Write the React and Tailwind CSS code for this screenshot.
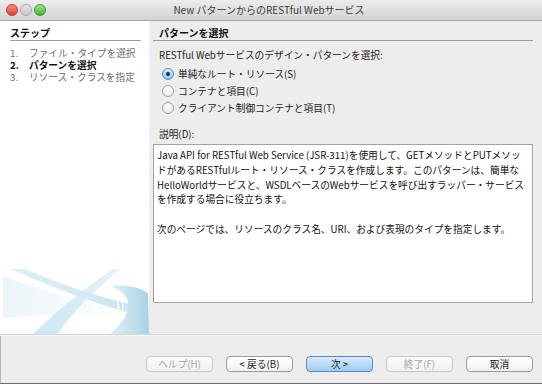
import React from "react";

const FONT = { fontFamily: '"Noto Sans CJK JP", "Noto Sans", sans-serif' };

function Light({ cls }) {
  return <div className={`w-[12px] h-[12px] rounded-full ${cls}`} />;
}

function Radio({ checked, label }) {
  return (
    <div className="flex items-center h-[17px] pl-[9px]">
      {checked ? (
        <div className="w-[12px] h-[12px] rounded-full border border-[#5b8fd0] bg-gradient-to-b from-[#d9ecfd] to-[#8fc1f2] flex items-center justify-center">
          <div className="w-[4px] h-[4px] rounded-full bg-[#1d2a3a]" />
        </div>
      ) : (
        <div className="w-[12px] h-[12px] rounded-full border border-[#9c9c9c] bg-gradient-to-b from-[#ffffff] to-[#ececec]" />
      )}
      <span className="ml-[4px] text-[9.7px] leading-[14px] text-[#222]">{label}</span>
    </div>
  );
}

function Btn({ children, variant }) {
  const base = "w-[67px] h-[16px] rounded-[4px] border flex items-center justify-center text-[9.7px] leading-[14px] whitespace-pre";
  if (variant === "default")
    return (
      <div className={`${base} border-[#5f86c0] bg-gradient-to-b from-[#d8ebfc] to-[#9ccbf3] text-[#1a1a1a]`}>{children}</div>
    );
  if (variant === "disabled")
    return (
      <div className={`${base} border-[#c6c6c6] bg-gradient-to-b from-[#fbfbfb] to-[#f1f1f1] text-[#a6a6a6]`}>{children}</div>
    );
  return (
    <div className={`${base} border-[#9a9a9a] bg-gradient-to-b from-[#ffffff] to-[#f1f1f1] text-[#1a1a1a]`}>{children}</div>
  );
}

function Swoosh() {
  return (
    <svg width="149" height="66" viewBox="0 0 149 66" className="block">
      <defs>
        <linearGradient id="fade" x1="0" y1="0" x2="1" y2="0">
          <stop offset="0" stopColor="#e9f4f8" stopOpacity="0.9" />
          <stop offset="1" stopColor="#e9f4f8" stopOpacity="0" />
        </linearGradient>
        <linearGradient id="cres" x1="0" y1="0" x2="1" y2="0">
          <stop offset="0" stopColor="#e2f0f6" />
          <stop offset="1" stopColor="#a9d3e4" />
        </linearGradient>
        <linearGradient id="lineA" x1="0" y1="0" x2="1" y2="0">
          <stop offset="0" stopColor="#dbeef5" />
          <stop offset="1" stopColor="#c4e2ee" />
        </linearGradient>
        <linearGradient id="lineB" x1="0" y1="1" x2="1" y2="0">
          <stop offset="0" stopColor="#c6e3ef" />
          <stop offset="1" stopColor="#e0f0f6" />
        </linearGradient>
      </defs>
      <path d="M3 8 C40 22 80 34 125 40 L120 48 C80 48 40 46 3 50 Z" fill="url(#fade)" />
      <path d="M10 1 L25 1 C60 16 95 28 130 36 L127 44 C90 34 50 18 10 1 Z" fill="url(#lineA)" opacity="0.9" />
      <path d="M113 1 L120 1 C95 22 72 44 58 66 L33 66 C55 44 85 20 113 1 Z" fill="url(#lineB)" opacity="0.85" />
      <path d="M110 18 C125 16 140 19 148 25 L149 66 L110 66 C122 56 130 44 128 33 C126 26 118 21 110 18 Z" fill="url(#cres)" />
      <path d="M116 30 C122 40 118 52 100 60" stroke="#ffffff" strokeWidth="1.5" fill="none" opacity="0.9" />
      <path d="M121 31 C126 42 122 54 106 63" stroke="#ffffff" strokeWidth="1.2" fill="none" opacity="0.9" />
    </svg>
  );
}

export default function App() {
  return (
    <div className="w-[542px] h-[384px] flex flex-col bg-[#ededed] overflow-hidden border-b border-[#6b6b6b]" style={FONT}>
      <div className="h-[21px] flex items-center bg-gradient-to-b from-[#ececec] to-[#d4d4d4] border-b border-[#a9a9a9]">
        <div className="flex items-center gap-[2px] pl-[6px]">
          <Light cls="bg-gradient-to-b from-[#f2908b] to-[#de3b33] border border-[#c0392f]" />
          <Light cls="bg-gradient-to-b from-[#e6e6e6] to-[#c8c8c8] border border-[#ababab]" />
          <Light cls="bg-gradient-to-b from-[#9fe38f] to-[#3bb72b] border border-[#3a9a2c]" />
        </div>
        <div className="flex-1 text-center text-[10px] leading-[14px] text-[#3a3a3a] pr-[50px]">
          New パターンからのRESTful Webサービス
        </div>
      </div>

      <div className="flex h-[313px]">
        <div className="w-[149px] bg-white flex flex-col">
          <div className="pt-[5px] px-[10px] pr-[8px]">
            <div className="h-[15px] leading-[14px] text-[10px] font-bold text-[#111] border-b border-[#9d9d9d]">ステップ</div>
            <div className="mt-[6px] text-[9.7px] leading-[12px]">
              <div className="flex text-[#6e6e6e]"><span className="w-[19px]">1.</span><span>ファイル・タイプを選択</span></div>
              <div className="flex text-[#111] font-bold"><span className="w-[19px]">2.</span><span>パターンを選択</span></div>
              <div className="flex text-[#6e6e6e]"><span className="w-[19px]">3.</span><span>リソース・クラスを指定</span></div>
            </div>
          </div>
          <div className="mt-auto">
            <Swoosh />
          </div>
        </div>

        <div className="flex-1 pl-[4px] pr-[9px]">
          <div className="pt-[5px]">
            <div className="h-[15px] leading-[14px] text-[10px] font-bold text-[#111] border-b border-[#9d9d9d] pl-[6px]">パターンを選択</div>
          </div>
          <div className="mt-[7px] pl-[6px] text-[9.7px] leading-[14px] text-[#222]">RESTful Webサービスのデザイン・パターンを選択:</div>
          <div className="mt-[3px]">
            <Radio checked label="単純なルート・リソース(S)" />
            <Radio label="コンテナと項目(C)" />
            <Radio label="クライアント制御コンテナと項目(T)" />
          </div>
          <div className="mt-[11px] pl-[6px] text-[9.7px] leading-[14px] text-[#222]">説明(D):</div>
          <div className="mt-[3px] h-[159px] bg-white border border-[#a3a3a3] pl-[3px] pr-[1px] pt-[3px] text-[9.7px] leading-[14.8px] text-[#111] overflow-hidden">
            <div className="whitespace-nowrap">Java API for RESTful Web Service (JSR-311)を使用して、GETメソッドとPUTメソッ</div>
            <div className="whitespace-nowrap">ドがあるRESTfulルート・リソース・クラスを作成します。このパターンは、簡単な</div>
            <div className="whitespace-nowrap">HelloWorldサービスと、WSDLベースのWebサービスを呼び出すラッパー・サービス</div>
            <div className="whitespace-nowrap">を作成する場合に役立ちます。</div>
            <div className="whitespace-nowrap mt-[14.8px]">次のページでは、リソースのクラス名、URI、および表現のタイプを指定します。</div>
          </div>
        </div>
      </div>

      <div className="h-px bg-[#d6d6d6]" />
      <div className="h-px bg-[#f7f7f7]" />

      <div className="flex-1 flex items-start pt-[20px] pl-[145px] gap-[13px] border-l border-[#b8b8b8]">
        <Btn variant="disabled">ヘルプ(H)</Btn>
        <Btn>{"< 戻る(B)"}</Btn>
        <Btn variant="default">{"次 >"}</Btn>
        <Btn variant="disabled">終了(F)</Btn>
        <Btn>取消</Btn>
      </div>
    </div>
  );
}
